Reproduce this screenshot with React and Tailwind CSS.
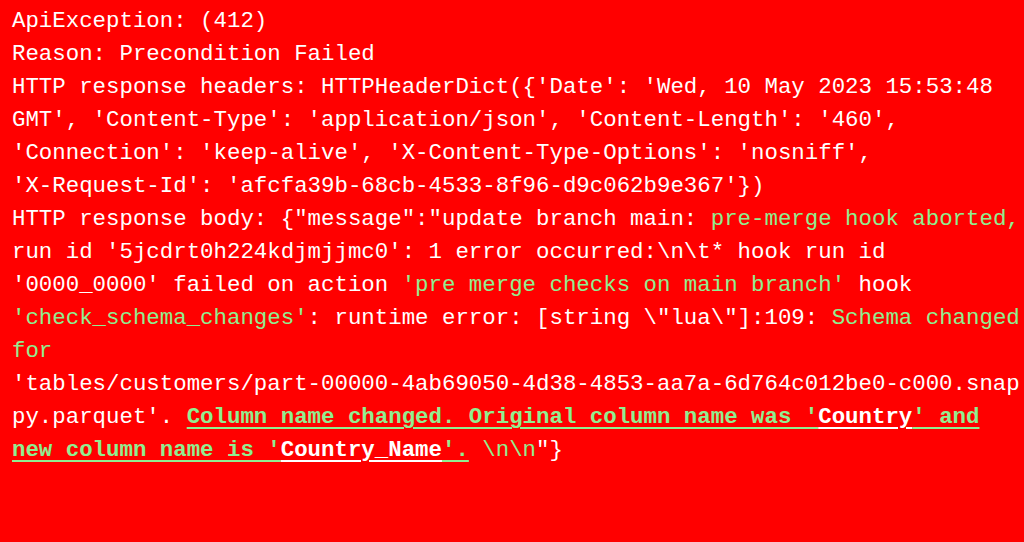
const G = ({ children }) => <span className="text-[#90ee90]">{children}</span>;

const U = ({ children }) => (
  <span className="font-bold text-[#90ee90] underline decoration-2 underline-offset-4">{children}</span>
);

const W = ({ children }) => (
  <span className="font-bold text-white underline decoration-2 underline-offset-4">{children}</span>
);

const lines = [
  <>ApiException: (412)</>,
  <>Reason: Precondition Failed</>,
  <>HTTP response headers: HTTPHeaderDict({"{"}'Date': 'Wed, 10 May 2023 15:53:48</>,
  <>GMT', 'Content-Type': 'application/json', 'Content-Length': '460',</>,
  <>'Connection': 'keep-alive', 'X-Content-Type-Options': 'nosniff',</>,
  <>'X-Request-Id': 'afcfa39b-68cb-4533-8f96-d9c062b9e367'{"})"}</>,
  <>
    HTTP response body: {'{"message":"update branch main: '}
    <G>pre-merge hook aborted,</G>
  </>,
  <>run id '5jcdrt0h224kdjmjjmc0': 1 error occurred:\n\t* hook run id</>,
  <>
    '0000_0000' failed on action <G>'pre merge checks on main branch'</G> hook
  </>,
  <>
    <G>'check_schema_changes'</G>: runtime error: [string \"lua\"]:109: <G>Schema changed</G>
  </>,
  <>
    <G>for</G>
  </>,
  <>'tables/customers/part-00000-4ab69050-4d38-4853-aa7a-6d764c012be0-c000.snap</>,
  <>
    py.parquet'. <U>Column name changed. Original column name was '</U>
    <W>Country</W>
    <U>' and</U>
  </>,
  <>
    <U>new column name is '</U>
    <W>Country_Name</W>
    <U>'.</U> <G>\n\n</G>
    {'"}'}
  </>,
];

export default function App() {
  return (
    <div className="w-[1024px] h-[542px] bg-[#ff0000] overflow-hidden px-3 pt-[5px] font-['Liberation_Mono',monospace] text-[22.4px] leading-[33px] text-white">
      {lines.map((line, i) => (
        <div key={i} className="whitespace-pre">
          {line}
        </div>
      ))}
    </div>
  );
}
